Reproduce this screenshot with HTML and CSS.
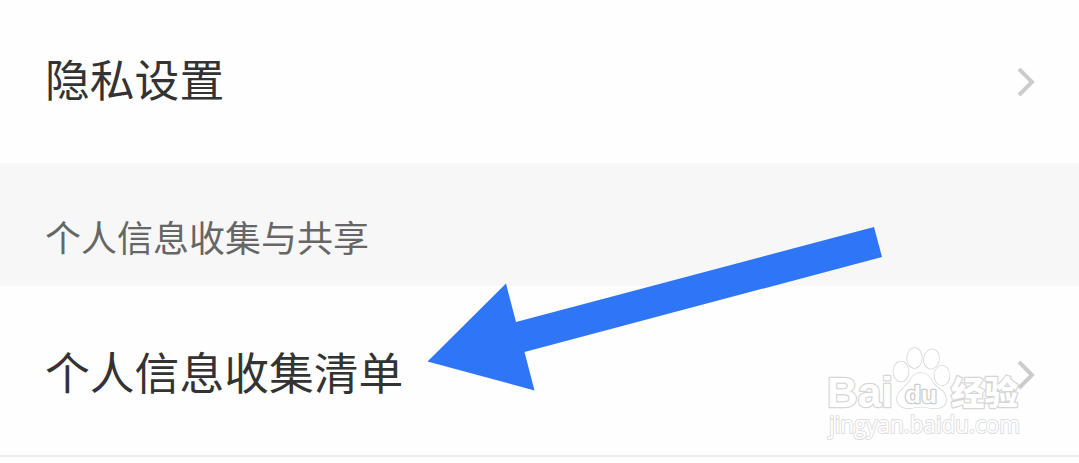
FILE: index.html
```html
<!DOCTYPE html>
<html lang="zh-CN">
<head>
    <meta charset="UTF-8">
    <title>隐私设置</title>
    <link rel="stylesheet" href="styles.css">
</head>
<body>
    <div class="settings">
        <div class="row">
            <span class="row-title">隐私设置</span>
            <svg class="chevron" viewBox="0 0 20 32">
                <path d="M3 3 L16 16 L3 29"/>
            </svg>
        </div>
        <div class="section-title">个人信息收集与共享</div>
        <div class="row row-last">
            <span class="row-title">个人信息收集清单</span>
            <svg class="chevron" viewBox="0 0 20 32">
                <path d="M3 3 L16 16 L3 29"/>
            </svg>
        </div>
    </div>

    <!-- arrow pointing at the list entry -->
    <svg class="arrow" viewBox="0 0 456 166">
        <path d="M0.500 136.500 L79 58.500 L89 97 L447 2 L455 32 L97.500 127 L107.500 165.500 Z"/>
    </svg>

    <svg class="watermark" viewBox="0 0 210 104">
        <text class="mark-latin" x="7" y="67" textLength="66" lengthAdjust="spacingAndGlyphs">Bai</text>
        <g class="paw">
            <ellipse cx="81" cy="31.500" rx="7.500" ry="10"/>
            <ellipse cx="94.500" cy="18" rx="7.300" ry="10"/>
            <ellipse cx="111.500" cy="19" rx="7.500" ry="9.700" transform="rotate(10 111.500 19)"/>
            <ellipse cx="122" cy="35.500" rx="7.500" ry="9.800"/>
            <path d="M101 33 C107 33 110 37 113 43 C117 49 126 50 126 60 C126 67 119 69 111 68 C105 66.500 97 66.500 91 68 C82 69 77 65 77 58 C78 51 85 48 89 42 C92 36 95 33 101 33 Z"/>
        </g>
        <text class="mark-du" x="85" y="63" textLength="32" lengthAdjust="spacingAndGlyphs">du</text>
        <text class="mark-cjk" x="131" y="65" textLength="67" lengthAdjust="spacingAndGlyphs">经验</text>
        <text class="mark-url" x="9" y="93" textLength="191" lengthAdjust="spacingAndGlyphs">jingyan.baidu.com</text>
    </svg>
</body>
</html>
```
FILE: styles.css
```css
body {
    margin: 0;
    position: relative;
    height: 463px;
    overflow: hidden;
    background-color: #fefefe;
    font-family: "Noto Sans CJK SC", sans-serif;
}
.row {
    display: flex;
    align-items: center;
    justify-content: space-between;
    height: 163px;
    padding: 0 43px 0 45px;
    box-sizing: border-box;
}
.row-last {
    height: 171px;
    padding-top: 8px;
    border-bottom: 2px solid #ececec;
}
.row-title {
    margin-bottom: 7px;
    font-size: 44.8px;
    line-height: 60px;
    color: #333;
}
.row-last .row-title {
    margin-bottom: 8px;
}
.section-title {
    height: 123px;
    padding: 12px 45px 0;
    box-sizing: border-box;
    background-color: #f7f7f7;
    font-size: 36px;
    line-height: 123px;
    color: #666;
}
.chevron {
    width: 20px;
    height: 32px;
}
.chevron path {
    fill: none;
    stroke: #ccc;
    stroke-width: 4;
}
.arrow {
    position: absolute;
    left: 427px;
    top: 225px;
    width: 456px;
    height: 166px;
}
.arrow path {
    fill: #2f76f6;
}
.watermark {
    position: absolute;
    left: 820px;
    top: 340px;
    width: 210px;
    height: 104px;
}
.watermark text, .paw {
    fill: #fff;
    stroke: #d6d6d6;
    stroke-width: 2.500;
    stroke-linejoin: round;
    paint-order: stroke;
}
.watermark .paw {
    stroke-width: 1.600;
}
.mark-latin {
    font: bold 43px "Liberation Sans", sans-serif;
}
.watermark .mark-du {
    font: bold 24px "Liberation Sans", sans-serif;
    stroke: #ccc;
}
.mark-cjk {
    font: 900 33px "Noto Sans CJK SC", sans-serif;
}
.watermark .mark-url {
    font: 23px "Open Sans", sans-serif;
    stroke: #dedede;
    stroke-width: 2;
}
```
